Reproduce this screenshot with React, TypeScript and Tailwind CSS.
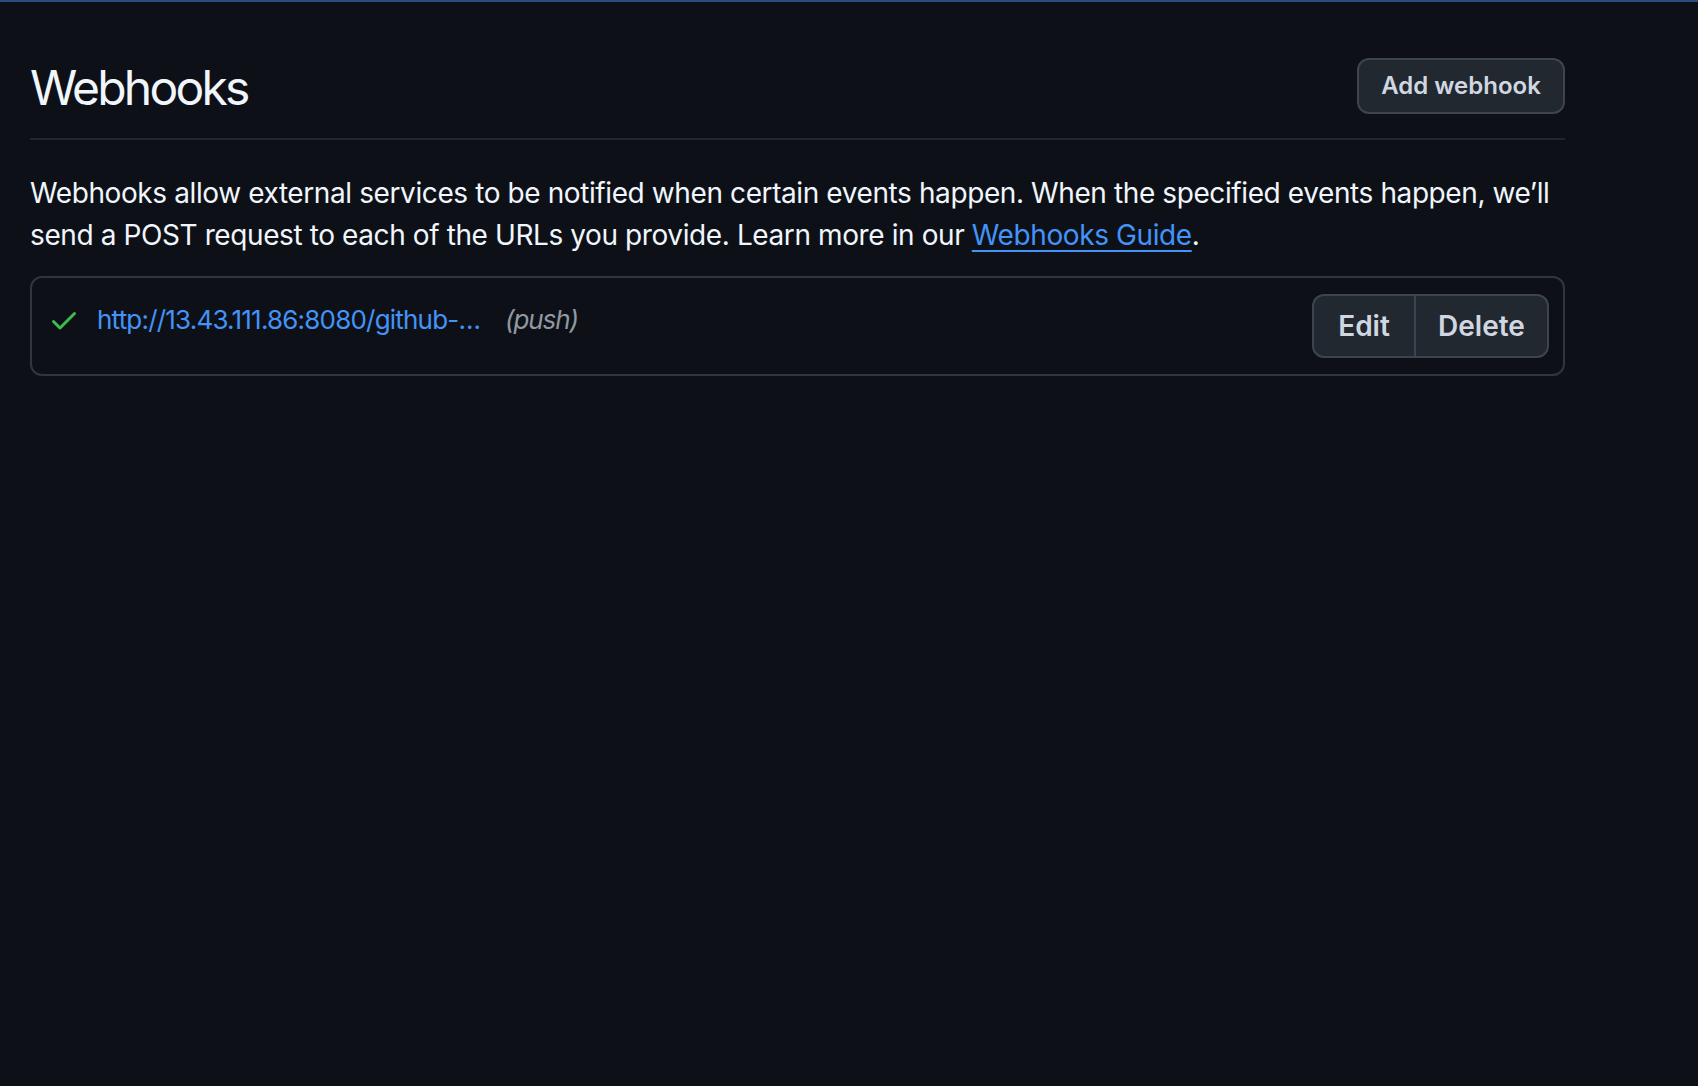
export default function App() {
  return (
    <div className="min-h-screen bg-[#0d1117] border-t-2 border-[#2c4c80] font-['Inter','Noto_Sans',sans-serif] text-[#f0f6fc]">
      <div className="ml-[30px] w-[1535px]">
        {/* header */}
        <div className="flex items-start justify-between pt-[56px] pb-[20px] border-b-2 border-[#21262d]">
          <h2 className="text-[48px] leading-[60px] font-normal tracking-[-2.8px]">Webhooks</h2>
          <button className="w-[208px] h-[56px] rounded-[12px] border-2 border-[#3d444d] bg-[#212830] text-[24px] font-semibold text-[#d1d7e0]">
            Add webhook
          </button>
        </div>

        <p className="mt-[32px] text-[28px] leading-[42px] tracking-[-0.4px]">
          Webhooks allow external services to be notified when certain events happen. When the specified events happen, we’ll
          send a POST request to each of the URLs you provide. Learn more in our{' '}
          <a href="#" className="text-[#4493f8] underline decoration-2 underline-offset-[5px]">Webhooks Guide</a>.
        </p>

        {/* hook list */}
        <div className="mt-[20px] border-2 border-[#30363d] rounded-[12px] pt-[16px] pb-[16px] pl-[15px] pr-[14px] flex items-start justify-between">
          <div className="mt-[10px] ml-[1px] flex items-center h-[32px]">
            <svg width="32" height="32" viewBox="0 0 16 16" fill="#3fb950" className="mr-[17px]">
              <path d="M13.78 4.22a.75.75 0 0 1 0 1.06l-7.25 7.25a.75.75 0 0 1-1.06 0L2.22 9.28a.751.751 0 0 1 .018-1.042.751.751 0 0 1 1.042-.018L6 10.94l6.72-6.72a.75.75 0 0 1 1.06 0Z" />
            </svg>
            <a href="#" className="text-[26px] leading-[32px] tracking-[-0.8px] text-[#4493f8]">http://13.43.111.86:8080/github-…</a>
            <span className="ml-[25px] text-[26px] leading-[32px] tracking-[-1.1px] italic text-[#9198a1]">(push)</span>
          </div>
          <div className="flex">
            <button className="w-[104px] h-[64px] rounded-l-[12px] border-2 border-[#3d444d] bg-[#212830] text-[28px] font-semibold text-[#d1d7e0]">
              Edit
            </button>
            <button className="-ml-[2px] w-[135px] h-[64px] rounded-r-[12px] border-2 border-[#3d444d] bg-[#212830] text-[28px] font-semibold text-[#d1d7e0]">
              Delete
            </button>
          </div>
        </div>
      </div>
    </div>
  );
}
